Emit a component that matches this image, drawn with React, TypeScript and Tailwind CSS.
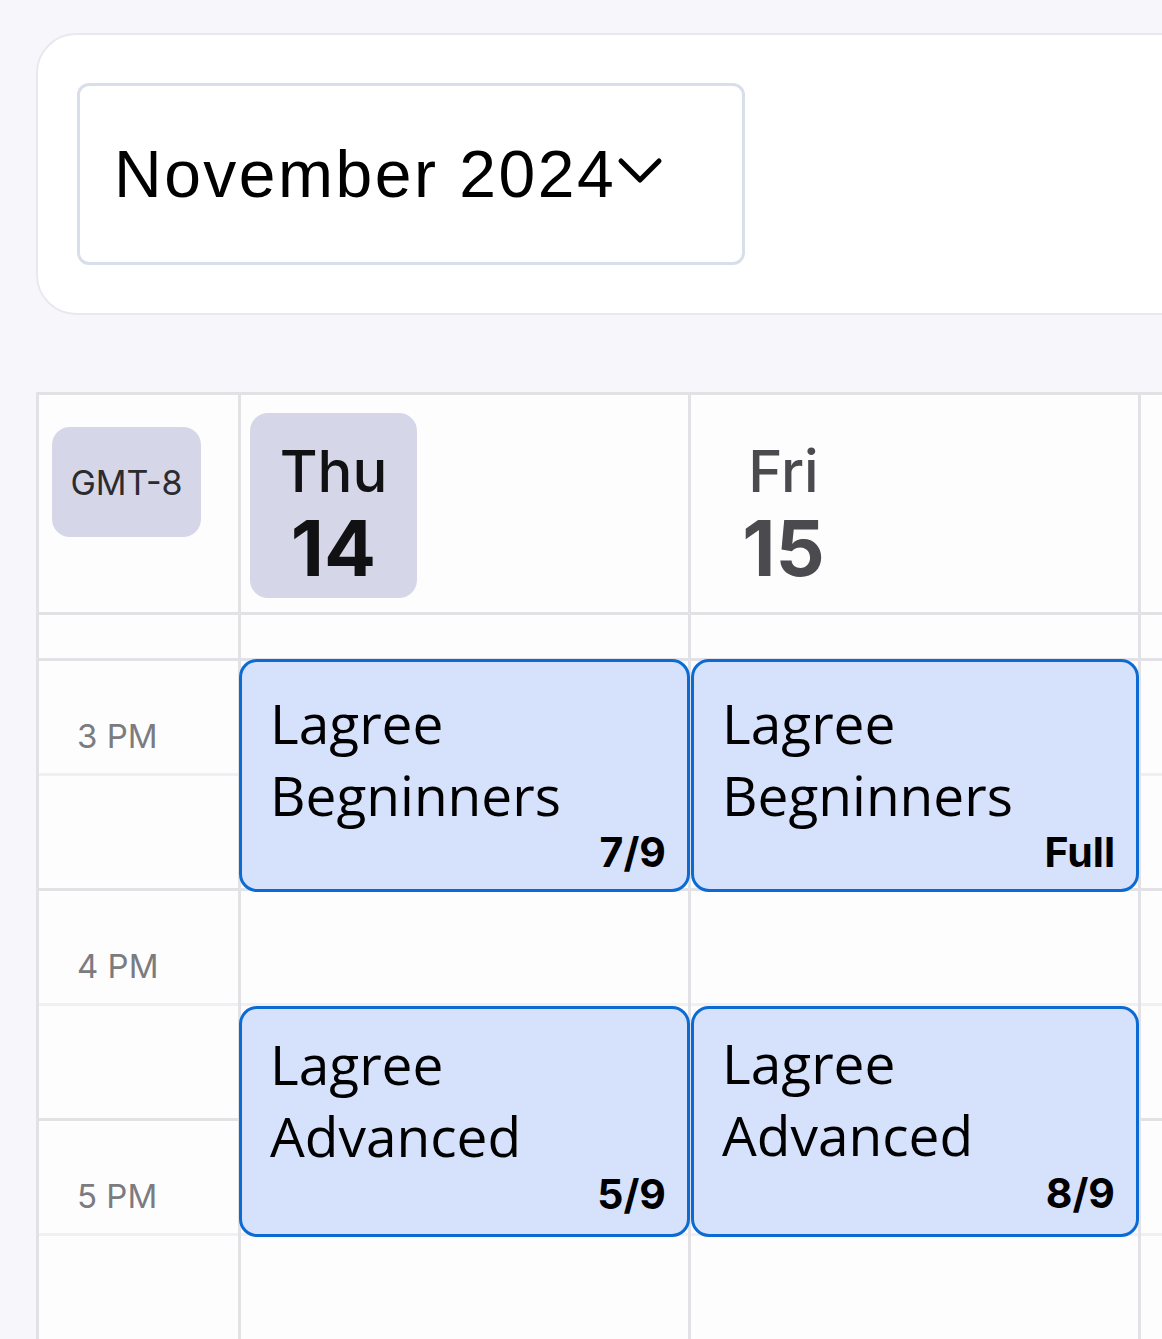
import React from 'react';

interface ClassEvent {
  id: string;
  first: string;
  second: string;
  count: string;
  pos: string;
  titlePad: string;
  countPad: string;
}

interface DayColumn {
  id: string;
  weekday: string;
  day: string;
  today: boolean;
  edge: string;
  events: ClassEvent[];
}

const days: DayColumn[] = [
  {
    id: 'thu',
    weekday: 'Thu',
    day: '14',
    today: true,
    edge: 'left-[-2px] right-[-2px]',
    events: [
      { id: 'thu-1', first: 'Lagree', second: 'Begninners', count: '7/9', pos: 'top-[264px] h-[233px]', titlePad: 'pt-[25px]', countPad: 'bottom-[15px]' },
      { id: 'thu-2', first: 'Lagree', second: 'Advanced', count: '5/9', pos: 'top-[611px] h-[231px]', titlePad: 'pt-[19px]', countPad: 'bottom-[18px]' },
    ],
  },
  {
    id: 'fri',
    weekday: 'Fri',
    day: '15',
    today: false,
    edge: 'left-0 right-[-1px]',
    events: [
      { id: 'fri-1', first: 'Lagree', second: 'Begninners', count: 'Full', pos: 'top-[264px] h-[233px]', titlePad: 'pt-[25px]', countPad: 'bottom-[15px]' },
      { id: 'fri-2', first: 'Lagree', second: 'Advanced', count: '8/9', pos: 'top-[611px] h-[231px]', titlePad: 'pt-[18px]', countPad: 'bottom-[19px]' },
    ],
  },
];

const times = ['3 PM', '4 PM', '5 PM', ''];

// rows shared by every column below the header
const SlotRows = ({ labels }: { labels?: boolean }) => (
  <>
    <div className="h-[46px] border-b-[3px] border-[#e2e2e6]" />
    {times.map((t, i) => (
      <div key={i}>
        <div className="h-[115px] border-b-[3px] border-[#f0f0f3] pl-[38px] pt-[55px]">
          {labels && t && (
            <span className="font-['Inter',sans-serif] text-[33px] leading-[40px] text-[#7b7b80]">{t}</span>
          )}
        </div>
        <div className="h-[115px] border-b-[3px] border-[#e2e2e6]" />
      </div>
    ))}
  </>
);

const EventCard = ({ ev, edge }: { ev: ClassEvent; edge: string }) => (
  <div className={`absolute ${edge} ${ev.pos} rounded-[18px] border-[3px] border-[#0b6bd3] bg-[#d6e1fc]`}>
    <div className={`pl-[28px] ${ev.titlePad} font-['Open_Sans',sans-serif] text-[55px] leading-[72px] text-black`}>
      <span className="block">{ev.first}</span>
      <span className="block">{ev.second}</span>
    </div>
    <span
      className={`absolute right-[21px] ${ev.countPad} font-['Inter',sans-serif] text-[41px] font-bold leading-[44px] text-black`}
    >
      {ev.count}
    </span>
  </div>
);

export default function App() {
  return (
    <div className="h-[1339px] w-full overflow-hidden bg-[#f7f7fb] pl-[36px] pt-[33px]">
      <div className="h-[282px] w-[1260px] rounded-[40px] border-2 border-[#e8e9f0] bg-white pl-[39px] pt-[48px]">
        <button className="flex h-[182px] w-[668px] items-center rounded-[12px] border-[3px] border-[#d8deea] bg-white pl-[34px]">
          <span className="font-['Liberation_Sans',Arial,sans-serif] text-[66px] leading-none tracking-[2.5px] text-black">
            November 2024
          </span>
          <svg width="48" height="30" viewBox="0 0 48 30" className="ml-0 mt-[-6px]" fill="none">
            <polyline points="5,5 24,24 43,5" stroke="#000" strokeWidth="5" strokeLinecap="round" strokeLinejoin="round" />
          </svg>
        </button>
      </div>

      <div className="mt-[77px] flex w-[1300px] border-l-[3px] border-t-[3px] border-[#e2e2e6] bg-[#fdfdfe]">
        {/* time column */}
        <div className="w-[202px] shrink-0 border-r-[3px] border-[#e2e2e6]">
          <div className="h-[220px] border-b-[3px] border-[#e2e2e6] pl-[13px] pt-[32px]">
            <div className="flex h-[110px] w-[149px] items-center justify-center rounded-[18px] bg-[#d5d7e8] font-['Inter',sans-serif] text-[34px] text-[#2b2b30]">
              GMT-8
            </div>
          </div>
          <SlotRows labels />
        </div>

        {days.map((d) => (
          <div key={d.id} className="relative w-[450px] shrink-0 border-r-[3px] border-[#e2e2e6]">
            <div className="h-[220px] border-b-[3px] border-[#e2e2e6] pl-[9px] pt-[18px]">
              <div
                className={`flex h-[185px] w-[167px] flex-col items-center rounded-[18px] pt-[26px] font-['Inter',sans-serif] ${
                  d.today ? 'bg-[#d5d7e8] text-[#111113]' : 'text-[#4a4a4f]'
                }`}
              >
                <span className="text-[58px] font-medium leading-[64px]">{d.weekday}</span>
                <span className="mt-[5px] text-[77px] font-bold leading-[80px]">{d.day}</span>
              </div>
            </div>
            <SlotRows />
            {d.events.map((ev) => (
              <EventCard key={ev.id} ev={ev} edge={d.edge} />
            ))}
          </div>
        ))}

        <div className="flex-1">
          <div className="h-[220px] border-b-[3px] border-[#e2e2e6]" />
          <SlotRows />
        </div>
      </div>
    </div>
  );
}
